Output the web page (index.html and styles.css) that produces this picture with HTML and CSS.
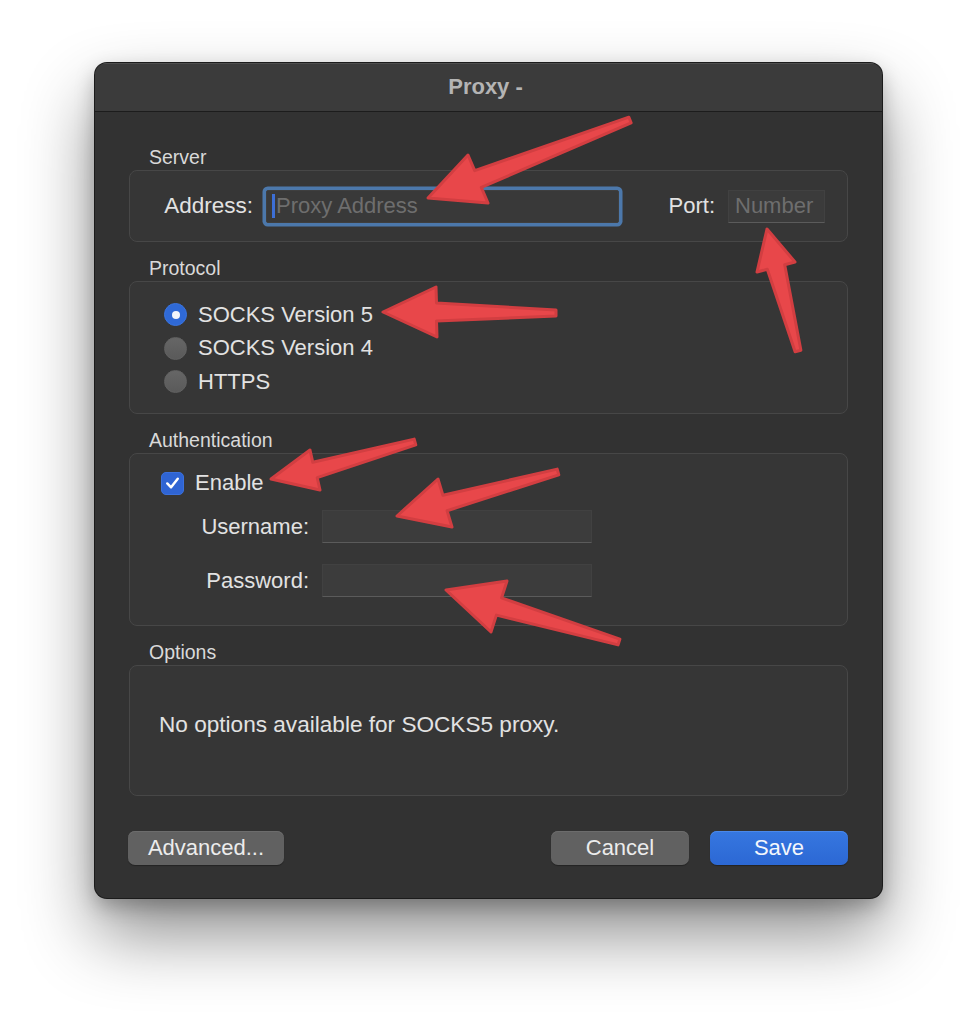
FILE: index.html
```html
<!DOCTYPE html>
<html>
<head>
<meta charset="utf-8">
<title>Proxy</title>
<link rel="stylesheet" href="styles.css">
</head>
<body>
<div class="stage">
  <div class="window">
    <div class="titlebar">Proxy -</div>
    <div class="content">
      <div class="section-label">Server</div>
      <div class="box server">
        <span class="lbl addr-lbl">Address:</span>
        <div class="field addr"><span class="caret"></span><span class="ph">Proxy Address</span></div>
        <span class="lbl port-lbl">Port:</span>
        <div class="field port"><span class="ph">Number</span></div>
      </div>

      <div class="section-label">Protocol</div>
      <div class="box protocol">
        <div class="radio-row"><span class="radio on"></span><span class="txt">SOCKS Version 5</span></div>
        <div class="radio-row"><span class="radio"></span><span class="txt">SOCKS Version 4</span></div>
        <div class="radio-row"><span class="radio"></span><span class="txt">HTTPS</span></div>
      </div>

      <div class="section-label">Authentication</div>
      <div class="box auth">
        <div class="check-row">
          <span class="checkbox"><svg viewBox="0 0 22 22" width="22" height="22"><polyline points="5.5,11.5 9.5,15.5 16.5,6.5" fill="none" stroke="#ffffff" stroke-width="2.6" stroke-linecap="round" stroke-linejoin="round"/></svg></span>
          <span class="txt">Enable</span>
        </div>
        <div class="creds">
          <span class="lbl">Username:</span>
          <div class="field cred"></div>
          <span class="lbl">Password:</span>
          <div class="field cred"></div>
        </div>
      </div>

      <div class="section-label">Options</div>
      <div class="box options">
        <span class="txt">No options available for SOCKS5 proxy.</span>
      </div>

      <div class="buttons">
        <button class="btn advanced">Advanced...</button>
        <span class="spacer"></span>
        <button class="btn">Cancel</button>
        <button class="btn primary">Save</button>
      </div>
    </div>
  </div>

  <svg class="arrows" viewBox="0 0 977 1024" width="977" height="1024">
    <g fill="#e8474a" stroke="#d23e41" stroke-width="3" stroke-linejoin="round">
      <polygon points="428,198 468,155 474.7,170.6 628.9,117.2 631.1,122.8 481.3,187.4 488,203"/>
      <polygon points="383,312 436,287 436.5,303 556,310 556,316 436.5,321 437,337"/>
      <polygon points="767,229 757,272 767.3,269.3 795.1,351.8 800.9,350.2 784.7,264.7 795,262"/>
      <polygon points="271,479 310,450 312.8,462.3 414.2,439.1 415.8,444.9 317.2,477.7 320,490"/>
      <polygon points="397,516 438,479 442.9,495.3 557.2,469.1 558.8,474.9 447.1,510.7 452,527"/>
      <polygon points="446,590 507,581 501.6,597.9 619.9,639.1 618.1,644.9 496.4,615.1 491,632"/>
    </g>
  </svg>
</div>
</body>
</html>
```

FILE: styles.css
```css
* { box-sizing: border-box; }

html, body {
  margin: 0;
  padding: 0;
  background: #ffffff;
}

body {
  font-family: "Liberation Sans", Arial, sans-serif;
}

.stage {
  position: relative;
  width: 977px;
  height: 1024px;
  padding: 63px 0 0 95px;
  overflow: hidden;
}

.window {
  width: 787px;
  height: 835px;
  background: #323232;
  border-radius: 12px;
  overflow: hidden;
  box-shadow: 0 0 0 1px #1b1b1b, 0 36px 70px rgba(0, 0, 0, 0.45), 0 8px 20px rgba(0, 0, 0, 0.25);
}

.titlebar {
  height: 49px;
  line-height: 48px;
  background: #3b3b3b;
  border-bottom: 1px solid #1c1c1c;
  box-shadow: inset 0 1px 0 #4e4e4e;
  text-align: center;
  font-weight: bold;
  font-size: 22px;
  color: #b4b4b4;
  padding-right: 6px;
}

.content {
  padding: 35px 34px 0 34px;
}

.section-label {
  font-size: 19.5px;
  line-height: 20px;
  height: 20px;
  color: #d9d9d9;
  margin: 0 0 3px 20px;
}

.box {
  background: #363636;
  border: 1px solid #474747;
  border-radius: 8px;
  margin-bottom: 16px;
}

.lbl, .txt {
  font-size: 22px;
  color: #e2e2e2;
  white-space: nowrap;
}

.field {
  height: 33px;
  background: #3b3b3b;
  border: 1px solid #414141;
  border-bottom-color: #5b5b5b;
  display: flex;
  align-items: center;
}

.ph {
  font-size: 22px;
  color: #6e6e6e;
  white-space: nowrap;
}

/* Server */
.server {
  height: 72px;
  display: flex;
  align-items: center;
  padding-left: 33px;
}

.addr-lbl {
  width: 90px;
  text-align: right;
  margin-right: 13px;
  font-size: 22.5px;
}

.field.addr {
  width: 353px;
  background: #393939;
  border-color: #3f3f3f;
  box-shadow: 0 0 0 3.5px #4c78ab;
  border-radius: 2px;
  padding-left: 5px;
}

.caret {
  width: 3px;
  height: 24px;
  background: #3d6fd6;
  margin-right: 1px;
}

.port-lbl {
  width: 49px;
  text-align: right;
  margin-left: 47px;
  margin-right: 13px;
}

.field.port {
  width: 97px;
  padding-left: 6px;
}

/* Protocol */
.protocol {
  height: 133px;
  padding: 16px 0 0 34px;
}

.radio-row {
  height: 33.5px;
  display: flex;
  align-items: center;
}

.radio {
  width: 23px;
  height: 23px;
  border-radius: 50%;
  background: linear-gradient(#666666, #5a5a5a);
  border: 1px solid #626262;
  margin-right: 11px;
  flex: none;
  position: relative;
}

.radio.on {
  background: #2f69d6;
  border-color: #3a74de;
}

.radio.on::after {
  content: "";
  position: absolute;
  left: 50%;
  top: 50%;
  width: 8px;
  height: 8px;
  margin: -4px 0 0 -4px;
  border-radius: 50%;
  background: #f2f5fb;
}

/* Authentication */
.auth {
  height: 173px;
  padding-top: 16px;
}

.check-row {
  height: 26px;
  display: flex;
  align-items: center;
  margin-left: 31px;
}

.checkbox {
  width: 23px;
  height: 23px;
  border-radius: 5px;
  background: #2f64d3;
  border: 1px solid #3b70dc;
  margin-right: 11px;
  display: flex;
  align-items: center;
  justify-content: center;
  flex: none;
}

.checkbox svg { display: block; }

.creds {
  display: grid;
  grid-template-columns: 179px 270px;
  column-gap: 13px;
  row-gap: 21px;
  align-items: center;
  margin-top: 14px;
}

.creds .lbl {
  text-align: right;
}

.field.cred {
  width: 270px;
  background: #3c3c3c;
}

/* Options */
.options {
  height: 131px;
  padding: 46px 30px 0 29px;
  margin-bottom: 35px;
}

.options .txt {
  line-height: 26px;
  display: block;
  font-size: 22.6px;
}

/* Buttons */
.buttons {
  display: flex;
  align-items: center;
  gap: 21px;
}

.spacer { flex: 1; }

.btn {
  height: 34px;
  width: 138px;
  border: none;
  border-radius: 7px;
  background: #616161;
  box-shadow: inset 0 1px 0 #6c6c6c, 0 1px 1px rgba(0,0,0,0.3);
  color: #ececec;
  font-family: "Liberation Sans", Arial, sans-serif;
  font-size: 22px;
  padding: 0;
  line-height: 34px;
}

.btn.advanced {
  width: 156px;
  margin-left: -1px;
}

.btn.primary {
  background: linear-gradient(#3677e0, #2c68d4);
  box-shadow: inset 0 1px 0 #4a88ea, 0 1px 1px rgba(0,0,0,0.3);
  color: #f4f7fc;
}

/* Annotation arrows */
.arrows {
  position: absolute;
  left: 0;
  top: 0;
  pointer-events: none;
}
```
